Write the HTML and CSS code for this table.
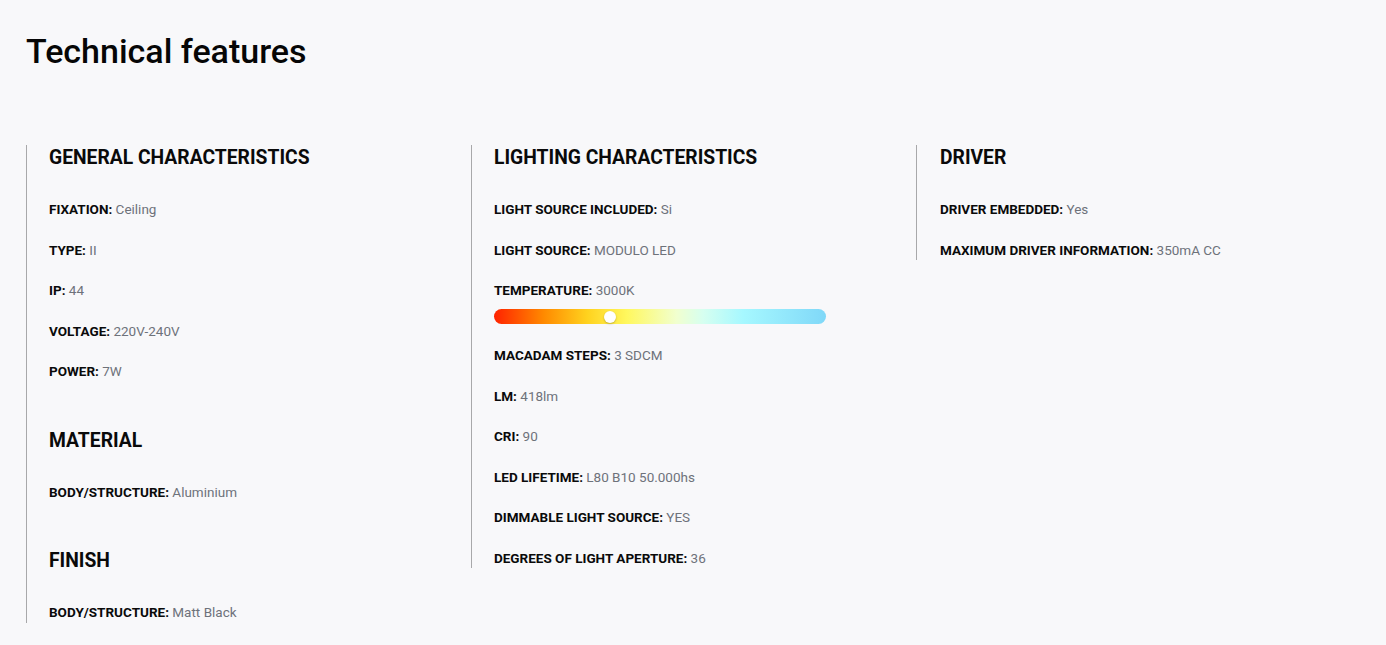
FILE: index.html
```html
<!DOCTYPE html>
<html lang="en">
<head>
<meta charset="utf-8">
<title>Technical features</title>
<link rel="stylesheet" href="styles.css">
</head>
<body>
<main class="page">
  <h1 class="title">Technical features</h1>
  <div class="columns">
    <section class="col">
      <div class="group">
        <h2 class="heading">GENERAL CHARACTERISTICS</h2>
        <p class="row"><b>FIXATION:</b> <span>Ceiling</span></p>
        <p class="row"><b>TYPE:</b> <span>II</span></p>
        <p class="row"><b>IP:</b> <span>44</span></p>
        <p class="row"><b>VOLTAGE:</b> <span>220V-240V</span></p>
        <p class="row"><b>POWER:</b> <span>7W</span></p>
      </div>
      <div class="group">
        <h2 class="heading">MATERIAL</h2>
        <p class="row"><b>BODY/STRUCTURE:</b> <span>Aluminium</span></p>
      </div>
      <div class="group">
        <h2 class="heading">FINISH</h2>
        <p class="row"><b>BODY/STRUCTURE:</b> <span>Matt Black</span></p>
      </div>
    </section>
    <section class="col">
      <div class="group">
        <h2 class="heading">LIGHTING CHARACTERISTICS</h2>
        <p class="row"><b>LIGHT SOURCE INCLUDED:</b> <span>Si</span></p>
        <p class="row"><b>LIGHT SOURCE:</b> <span>MODULO LED</span></p>
        <div class="row row-temp">
          <p class="label"><b>TEMPERATURE:</b> <span>3000K</span></p>
          <div class="temp-bar"><span class="knob" style="left: 35%"></span></div>
        </div>
        <p class="row"><b>MACADAM STEPS:</b> <span>3 SDCM</span></p>
        <p class="row"><b>LM:</b> <span>418lm</span></p>
        <p class="row"><b>CRI:</b> <span>90</span></p>
        <p class="row"><b>LED LIFETIME:</b> <span>L80 B10 50.000hs</span></p>
        <p class="row"><b>DIMMABLE LIGHT SOURCE:</b> <span>YES</span></p>
        <p class="row"><b>DEGREES OF LIGHT APERTURE:</b> <span>36</span></p>
      </div>
    </section>
    <section class="col">
      <div class="group">
        <h2 class="heading">DRIVER</h2>
        <p class="row"><b>DRIVER EMBEDDED:</b> <span>Yes</span></p>
        <p class="row"><b>MAXIMUM DRIVER INFORMATION:</b> <span>350mA CC</span></p>
      </div>
    </section>
  </div>
</main>
</body>
</html>
```
FILE: styles.css
```css
html, body {
  margin: 0;
  padding: 0;
  background: #f8f8fa;
}
body {
  font-family: Roboto, "Liberation Sans", Arial, sans-serif;
  color: #0a0a0a;
}
.page {
  padding: 26px 0 0 26px;
}
.title {
  margin: 0;
  font-size: 34px;
  line-height: 50px;
  font-weight: 500;
  color: #060606;
  letter-spacing: 0;
}
.columns {
  display: flex;
  align-items: flex-start;
  margin-top: 69px;
}
.col {
  width: 445px;
  flex-shrink: 0;
  box-sizing: border-box;
  border-left: 1px solid #a8a8aa;
  padding-left: 22px;
  display: flex;
  flex-direction: column;
  gap: 46px;
}
.col + .col + .col {
  padding-left: 23px;
}
.group {
  display: flex;
  flex-direction: column;
}
.heading {
  margin: 0 0 28px 0;
  font-size: 19.3px;
  line-height: 26px;
  font-weight: 700;
  color: #0a0a0a;
}
.row {
  margin: 0 0 20px 0;
  font-size: 13.5px;
  line-height: 20.5px;
}
.row-temp {
  margin-bottom: 21px;
}
.group > .row:last-child {
  margin-bottom: 0;
}
.label {
  margin: 0;
}
.row b {
  font-weight: 700;
  color: #0a0a0a;
}
.row span {
  color: #6e727a;
}
.temp-bar {
  position: relative;
  margin-top: 8.5px;
  width: 332px;
  height: 15px;
  border-radius: 8px;
  background: linear-gradient(to right,
    #ff2200 0%,
    #ff8a00 15%,
    #ffd21e 28%,
    #fff85e 40%,
    #f1ffcf 55%,
    #d6fff0 63%,
    #a6f8ff 75%,
    #80d8f8 100%);
}
.knob {
  position: absolute;
  top: 50%;
  width: 12px;
  height: 12px;
  border-radius: 50%;
  background: #ffffff;
  transform: translate(-50%, -50%);
  box-shadow: 0 1px 2px rgba(0, 0, 0, 0.25);
}
```
